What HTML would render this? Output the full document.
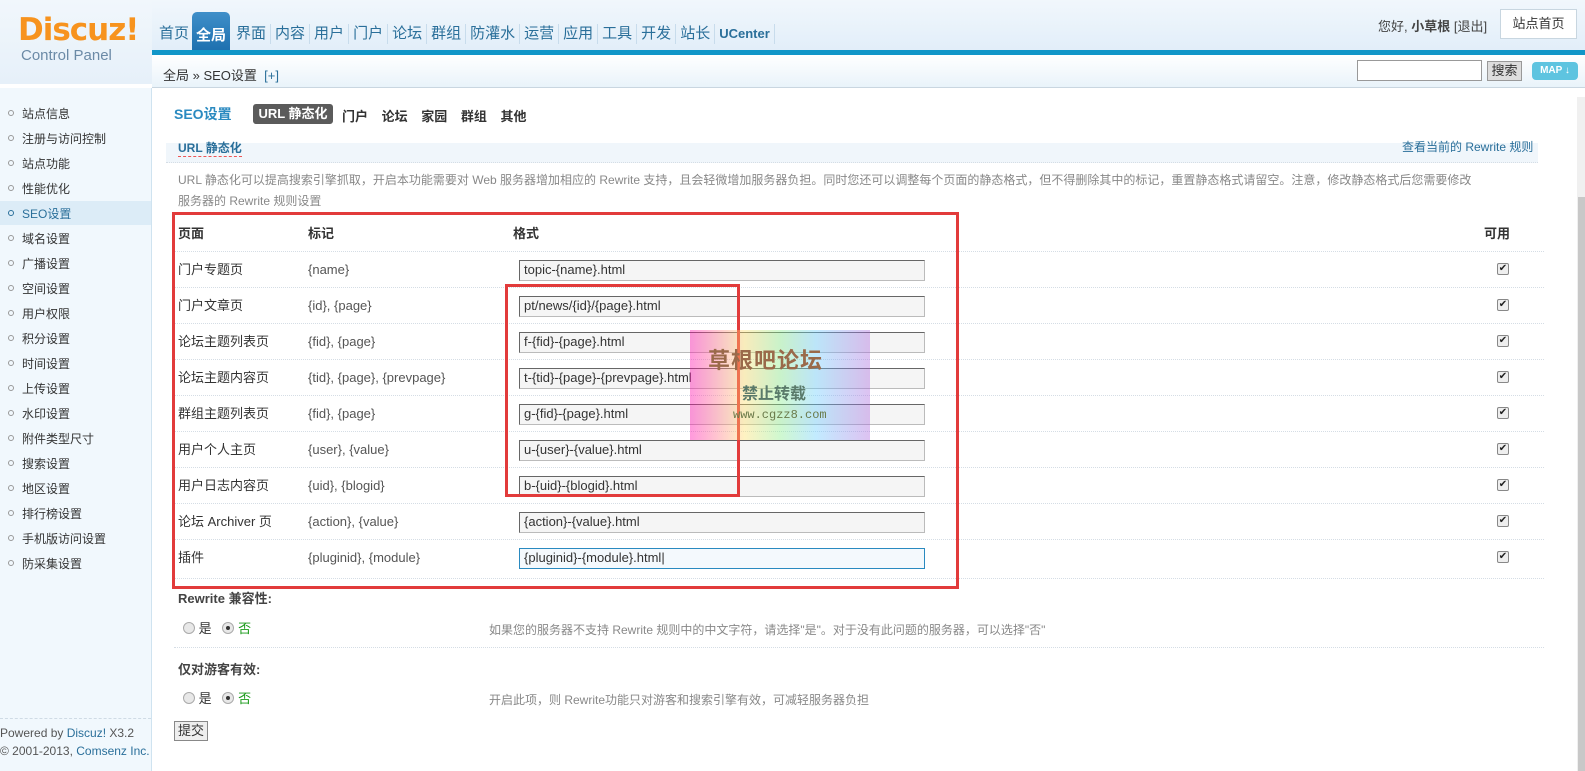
<!DOCTYPE html>
<html><head><meta charset="utf-8"><style>
*{margin:0;padding:0;box-sizing:border-box}
body{width:1585px;height:771px;overflow:hidden;font-family:"Liberation Sans","Noto Sans CJK SC",sans-serif;font-size:12px;color:#333;background:#fff;position:relative}
.a{position:absolute}
#hd{left:0;top:0;width:1585px;height:50px;background:linear-gradient(#f1f7fc,#e2eef9)}
#lg{left:0;top:0;width:152px;height:84px;background:linear-gradient(#f1f7fc,#e6f0f9)}
#logo{left:18px;top:12px;font-size:31px;font-weight:bold;color:#f7931e;letter-spacing:-1px;font-family:"DejaVu Sans","Liberation Sans",sans-serif}
#cp{left:21px;top:47px;font-size:15px;color:#6b8aa6}
#nav{left:155px;top:24px;font-size:15px;color:#2a6f9a;white-space:nowrap}
#nav span{display:inline-block;padding:0 4px;border-right:1px solid #c8dcec;line-height:20px}
#tab{left:192px;top:12px;width:38px;height:40px;background:linear-gradient(#3f8fc9,#1c6fae);border-radius:5px 5px 0 0;color:#fff;font-size:15px;font-weight:bold;text-align:center;padding-top:12px}
#bl{left:152px;top:50px;width:1433px;height:5px;background:#1196c8}
#bc{left:152px;top:55px;width:1433px;height:33px;background:linear-gradient(#fff,#e9f3fa);border-bottom:1px solid #c9d6e0}
#side{left:0;top:88px;width:152px;height:683px;background:#f1f8fd;border-right:1px solid #cfe3f0}
.mi{position:absolute;left:8px;font-size:12px;color:#333}
.mi i{display:inline-block;width:6px;height:6px;border:1px solid #999;border-radius:50%;margin-right:8px;vertical-align:2px}
.row{position:absolute;left:174px;width:1370px;height:36px;border-top:1px dotted #d5dde5}
.c1,.c2{position:absolute;top:10px;font-size:13px;line-height:16px}
.c1{left:4px;color:#333}.c2{left:134px;color:#555}
.inp{position:absolute;left:345px;top:8px;width:406px;height:21px;border:1px solid #bbb;border-top-color:#666;border-left-color:#666;background:#f5f5f5;font-size:13px;padding:1px 4px;color:#333}
.ck{position:absolute;left:1323px;top:11px;width:12px;height:12px;border:1px solid #888;border-radius:2px;background:#eee;font-size:10px;line-height:10px;text-align:center;color:#222}
.rad{display:inline-block;width:12px;height:12px;border:1px solid #aaa;border-radius:50%;background:#e8e8e8;vertical-align:-1px;position:relative}
.rad.on:after{content:"";position:absolute;left:3px;top:3px;width:4px;height:4px;border-radius:50%;background:#333}
.red{border:3px solid #e23b3b}
</style></head><body>
<div id="hd" class="a"></div>
<div id="lg" class="a"></div>
<div id="logo" class="a">Discuz!</div>
<div id="cp" class="a">Control Panel</div>
<div id="nav" class="a"><span>首页</span><span style="width:38px;border:0"></span><span>界面</span><span>内容</span><span>用户</span><span>门户</span><span>论坛</span><span>群组</span><span>防灌水</span><span>运营</span><span>应用</span><span>工具</span><span>开发</span><span>站长</span><span style="font-size:13px;font-weight:bold">UCenter</span></div>
<div id="tab" class="a">全局</div>
<div class="a" style="left:1378px;top:16px;font-size:13px;color:#444">您好, <b>小草根</b> [退出]</div>
<div class="a" style="left:1500px;top:9px;width:77px;height:30px;border:1px solid #c8d6e0;background:#fff;font-size:13px;text-align:center;line-height:28px">站点首页</div>
<div id="bl" class="a"></div>
<div id="bc" class="a"></div>
<div class="a" style="left:163px;top:65px;font-size:13px;color:#333">全局 » SEO设置 <span style="color:#2a6f9a">&nbsp;[+]</span></div>
<div class="a" style="left:1357px;top:60px;width:125px;height:21px;border:1px solid #999;background:#fff"></div>
<div class="a" style="left:1487px;top:61px;width:35px;height:20px;border:1px solid #999;background:#ddd;font-size:13px;text-align:center;line-height:18px">搜索</div>
<div class="a" style="left:1532px;top:62px;width:46px;height:18px;background:#5ec4e0;border-radius:4px;color:#fff;font-size:10px;font-weight:bold;text-align:center;line-height:18px">MAP ↓</div>
<div id="side" class="a">
<div class="mi" style="top:17px"><i></i>站点信息</div>
<div class="mi" style="top:42px"><i></i>注册与访问控制</div>
<div class="mi" style="top:67px"><i></i>站点功能</div>
<div class="mi" style="top:92px"><i></i>性能优化</div>
<div style="position:absolute;left:0;top:113px;width:151px;height:24px;background:#dcecf7"></div>
<div class="mi" style="top:117px;color:#2a6f9a"><i style="border-color:#2a6f9a"></i>SEO设置</div>
<div class="mi" style="top:142px"><i></i>域名设置</div>
<div class="mi" style="top:167px"><i></i>广播设置</div>
<div class="mi" style="top:192px"><i></i>空间设置</div>
<div class="mi" style="top:217px"><i></i>用户权限</div>
<div class="mi" style="top:242px"><i></i>积分设置</div>
<div class="mi" style="top:267px"><i></i>时间设置</div>
<div class="mi" style="top:292px"><i></i>上传设置</div>
<div class="mi" style="top:317px"><i></i>水印设置</div>
<div class="mi" style="top:342px"><i></i>附件类型尺寸</div>
<div class="mi" style="top:367px"><i></i>搜索设置</div>
<div class="mi" style="top:392px"><i></i>地区设置</div>
<div class="mi" style="top:417px"><i></i>排行榜设置</div>
<div class="mi" style="top:442px"><i></i>手机版访问设置</div>
<div class="mi" style="top:467px"><i></i>防采集设置</div>
<div style="position:absolute;left:0;top:630px;width:151px;border-top:1px dashed #cfdbe5"></div>
<div style="position:absolute;left:0;top:638px;font-size:12px;color:#555">Powered by <span style="color:#2a6f9a">Discuz!</span> X3.2</div>
<div style="position:absolute;left:0;top:656px;font-size:12px;color:#555;white-space:nowrap">© 2001-2013, <span style="color:#2a6f9a">Comsenz Inc.</span></div>
</div>
<div class="a" style="left:1577px;top:97px;width:8px;height:674px;background:#f0f0f0"></div>
<div class="a" style="left:1578px;top:197px;width:7px;height:574px;background:#c8c8c8"></div>
<div class="a" style="left:174px;top:104px;font-size:14px;font-weight:bold;color:#2a8ac0">SEO设置</div>
<div class="a" style="left:253px;top:104px;width:80px;height:20px;background:#5b5b5b;border-radius:3px;color:#fff;font-weight:bold;font-size:13px;text-align:center;line-height:20px">URL 静态化</div>
<div class="a" style="left:342px;top:106px;font-size:13px;font-weight:bold;color:#333;word-spacing:10px">门户 论坛 家园 群组 其他</div>
<div class="a" style="left:166px;top:143px;width:1372px;height:20px;background:#f0f6fb;border-bottom:1px dotted #d5dde5"></div>
<div class="a" style="left:178px;top:139px;font-size:12px;font-weight:bold;color:#2a6f9a;border-bottom:1px dashed #e55">URL 静态化</div>
<div class="a" style="left:1402px;top:138px;font-size:12px;color:#2a6f9a">查看当前的 Rewrite 规则</div>
<div class="a" style="left:178px;top:170px;width:1300px;font-size:12px;color:#888;line-height:21px">URL 静态化可以提高搜索引擎抓取，开启本功能需要对 Web 服务器增加相应的 Rewrite 支持，且会轻微增加服务器负担。同时您还可以调整每个页面的静态格式，但不得删除其中的标记，重置静态格式请留空。注意，修改静态格式后您需要修改<br>服务器的 Rewrite 规则设置</div>
<div class="row" style="top:216px;border-top:0"><b class="c1" style="font-weight:bold">页面</b><b class="c2" style="color:#333">标记</b><b class="c2" style="left:339px;color:#333">格式</b><b class="c2" style="left:1310px;color:#333">可用</b></div>
<div class="row" style="top:251px"><span class="c1">门户专题页</span><span class="c2">{name}</span><div class="inp">topic-{name}.html</div><div class="ck">✔</div></div>
<div class="row" style="top:287px"><span class="c1">门户文章页</span><span class="c2">{id}, {page}</span><div class="inp">pt/news/{id}/{page}.html</div><div class="ck">✔</div></div>
<div class="row" style="top:323px"><span class="c1">论坛主题列表页</span><span class="c2">{fid}, {page}</span><div class="inp">f-{fid}-{page}.html</div><div class="ck">✔</div></div>
<div class="row" style="top:359px"><span class="c1">论坛主题内容页</span><span class="c2">{tid}, {page}, {prevpage}</span><div class="inp">t-{tid}-{page}-{prevpage}.html</div><div class="ck">✔</div></div>
<div class="row" style="top:395px"><span class="c1">群组主题列表页</span><span class="c2">{fid}, {page}</span><div class="inp">g-{fid}-{page}.html</div><div class="ck">✔</div></div>
<div class="row" style="top:431px"><span class="c1">用户个人主页</span><span class="c2">{user}, {value}</span><div class="inp">u-{user}-{value}.html</div><div class="ck">✔</div></div>
<div class="row" style="top:467px"><span class="c1">用户日志内容页</span><span class="c2">{uid}, {blogid}</span><div class="inp">b-{uid}-{blogid}.html</div><div class="ck">✔</div></div>
<div class="row" style="top:503px"><span class="c1">论坛 Archiver 页</span><span class="c2">{action}, {value}</span><div class="inp">{action}-{value}.html</div><div class="ck">✔</div></div>
<div class="row" style="top:539px"><span class="c1">插件</span><span class="c2">{pluginid}, {module}</span><div class="inp" style="border:1px solid #2a8ac0;background:#f4f9fd">{pluginid}-{module}.html|</div><div class="ck">✔</div></div>
<div class="row" style="top:578px;height:1px"></div>
<div class="a red" style="left:172px;top:212px;width:787px;height:377px"></div>
<div class="a red" style="left:505px;top:284px;width:235px;height:213px"></div>
<div class="a" style="left:690px;top:330px;width:180px;height:110px;opacity:.4;background:linear-gradient(90deg,#f0a 0%,#fd6 30%,#8e8 50%,#6cf 70%,#a6d 100%)"></div>
<div class="a" style="left:708px;top:343px;font-size:22px;font-weight:bold;color:#9a6a4a;letter-spacing:1px">草根吧论坛</div>
<div class="a" style="left:742px;top:380px;font-size:16px;font-weight:bold;color:#5a7a6a">禁止转载</div>
<div class="a" style="left:733px;top:408px;font-size:12px;color:#6a7a4a;font-family:'Liberation Mono',monospace">www.cgzz8.com</div>
<div class="a" style="left:178px;top:588px;font-size:13px;font-weight:bold;color:#444">Rewrite 兼容性:</div>
<div class="a" style="left:183px;top:618px;font-size:13px"><span class="rad"></span> 是 &nbsp;&nbsp;<span class="rad on"></span> <span style="color:#1a9a1a">否</span></div>
<div class="a" style="left:489px;top:621px;font-size:12px;color:#888">如果您的服务器不支持 Rewrite 规则中的中文字符，请选择"是"。对于没有此问题的服务器，可以选择"否"</div>
<div class="a" style="left:174px;top:647px;width:1370px;border-top:1px dotted #d5dde5"></div>
<div class="a" style="left:178px;top:659px;font-size:13px;font-weight:bold;color:#444">仅对游客有效:</div>
<div class="a" style="left:183px;top:688px;font-size:13px"><span class="rad"></span> 是 &nbsp;&nbsp;<span class="rad on"></span> <span style="color:#1a9a1a">否</span></div>
<div class="a" style="left:489px;top:691px;font-size:12px;color:#888">开启此项，则 Rewrite功能只对游客和搜索引擎有效，可减轻服务器负担</div>
<div class="a" style="left:174px;top:721px;width:34px;height:20px;border:1px solid #888;background:#eee;font-size:13px;text-align:center;line-height:18px">提交</div>
</body></html>
